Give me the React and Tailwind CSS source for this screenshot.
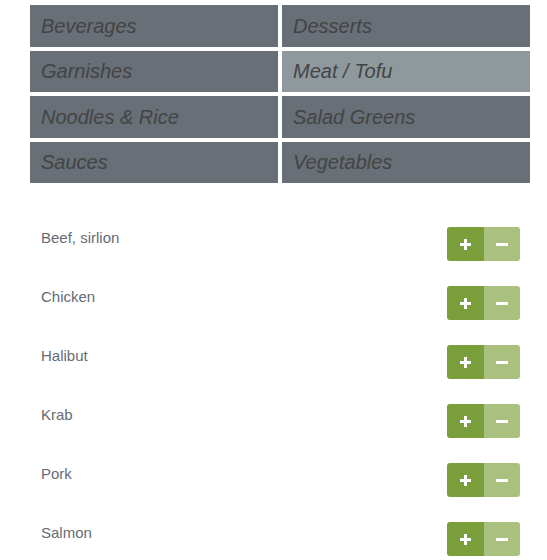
import React from "react";

const categories = [
  "Beverages",
  "Desserts",
  "Garnishes",
  "Meat / Tofu",
  "Noodles & Rice",
  "Salad Greens",
  "Sauces",
  "Vegetables",
];

const items = ["Beef, sirlion", "Chicken", "Halibut", "Krab", "Pork", "Salmon"];

function Stepper() {
  return (
    <div className="flex h-[34px] w-[73px] overflow-hidden rounded-[3px]">
      <button className="flex w-[37px] items-center justify-center bg-[#7a9e3a]">
        <span className="relative block h-[11px] w-[11px]">
          <span className="absolute left-0 top-[4px] h-[3px] w-[11px] bg-white" />
          <span className="absolute left-[4px] top-0 h-[11px] w-[3px] bg-white" />
        </span>
      </button>
      <button className="flex w-[36px] items-center justify-center bg-[#aac07e]">
        <span className="block h-[3px] w-[12px] bg-white" />
      </button>
    </div>
  );
}

export default function App() {
  return (
    <div className="min-h-screen bg-white font-[Liberation_Sans,Arial,sans-serif]">
      <div className="ml-[30px] w-[500px] pt-[5px]">
        <div className="grid grid-cols-2 gap-x-[4px] gap-y-[4px]">
          {categories.map((c) => (
            <div
              key={c}
              className={
                c === "Meat / Tofu"
                  ? "flex h-[41.5px] items-center bg-[#8f989d] px-[11px] text-[20px] italic text-[#444]"
                  : "flex h-[41.5px] items-center bg-[#686f77] px-[11px] text-[20px] italic text-[#444]"
              }
            >
              {c}
            </div>
          ))}
        </div>

        <div className="mt-[44px] pl-[11px] pr-[10px]">
          {items.map((it) => (
            <div key={it} className="flex h-[59px] items-start justify-between">
              <span className="pt-[2px] text-[15px] leading-[18px] text-[#656b73]">{it}</span>
              <Stepper />
            </div>
          ))}
        </div>
      </div>
    </div>
  );
}
